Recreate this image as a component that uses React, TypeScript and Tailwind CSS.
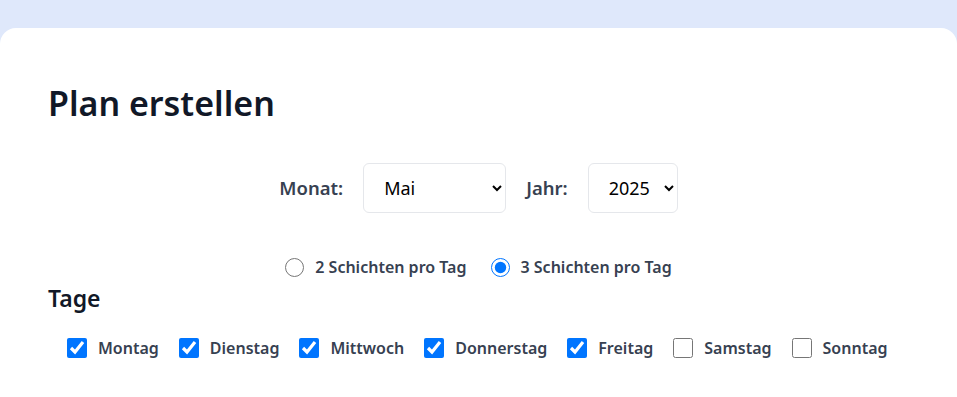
import { useState } from "react";

const months = ["Januar", "Februar", "März", "April", "Mai", "Juni", "Juli", "August", "September", "Oktober", "November", "Dezember"];
const days = ["Montag", "Dienstag", "Mittwoch", "Donnerstag", "Freitag", "Samstag", "Sonntag"];

export default function App() {
  const [month, setMonth] = useState("Mai");
  const [year, setYear] = useState("2025");
  const [shifts, setShifts] = useState(3);
  const [active, setActive] = useState<string[]>(days.slice(0, 5));

  const toggle = (d: string) =>
    setActive((a) => (a.includes(d) ? a.filter((x) => x !== d) : [...a, d]));

  return (
    <div className="min-h-screen bg-[#dfe8fb] pt-[28px] font-['Noto_Sans',sans-serif]">
      <div className="min-h-[369px] rounded-t-2xl bg-white px-12 pt-[58px]">
        <h1 className="text-[34px] font-semibold leading-none text-[#111827]">Plan erstellen</h1>

        <div className="mt-[43px] flex items-center justify-center gap-5">
          <label className="text-[18.5px] font-semibold text-[#374151]">Monat:</label>
          <select
            value={month}
            onChange={(e) => setMonth(e.target.value)}
            className="h-[50px] w-[143px] rounded-md border border-[#e5e7eb] bg-white pl-4 pr-2 text-[18px] text-black"
          >
            {months.map((m) => (
              <option key={m}>{m}</option>
            ))}
          </select>
          <label className="text-[18.5px] font-semibold text-[#374151]">Jahr:</label>
          <select
            value={year}
            onChange={(e) => setYear(e.target.value)}
            className="h-[50px] w-[90px] rounded-md border border-[#e5e7eb] bg-white pl-4 pr-2 text-[18px] text-black"
          >
            {["2024", "2025", "2026"].map((y) => (
              <option key={y}>{y}</option>
            ))}
          </select>
        </div>

        <div className="mt-[42px] flex items-center justify-center gap-6 text-[16px] font-semibold text-[#374151]">
          {[2, 3].map((n) => (
            <label key={n} className="flex items-center gap-[11px]">
              <input
                type="radio"
                name="shifts"
                checked={shifts === n}
                onChange={() => setShifts(n)}
                className="m-0 h-[19px] w-[19px]"
              />
              {n} Schichten pro Tag
            </label>
          ))}
        </div>

        <h2 className="mt-[2px] text-[23px] font-semibold text-[#111827]">Tage</h2>

        <div className="mt-[20px] flex items-center gap-5 pl-[19px] text-[16px] font-semibold text-[#374151]">
          {days.map((d) => (
            <label key={d} className="flex items-center gap-[11px]">
              <input
                type="checkbox"
                checked={active.includes(d)}
                onChange={() => toggle(d)}
                className="m-0 h-[20px] w-[20px]"
              />
              {d}
            </label>
          ))}
        </div>
      </div>
    </div>
  );
}
